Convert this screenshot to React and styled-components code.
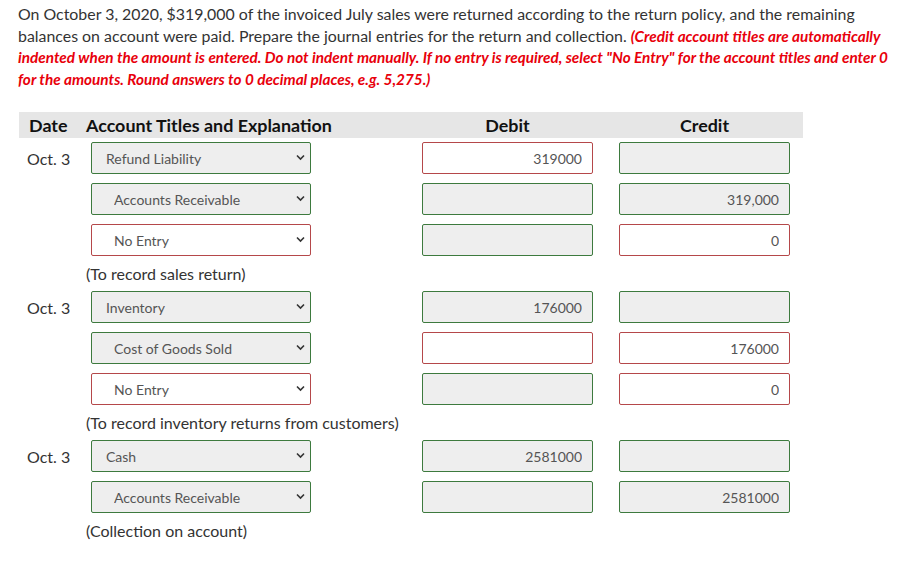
import * as React from 'react';
import styled, { createGlobalStyle } from 'styled-components';

const GlobalStyle = createGlobalStyle`
  body {
    margin: 0;
    background: #fff;
    font-family: Lato, "Open Sans", sans-serif;
    color: #333;
  }
`;

const Page = styled.div`
  padding: 3px 0 0 18px;
`;

const Prompt = styled.p`
  margin: 0;
  width: 884px;
  font-size: 15.9px;
  line-height: 21.5px;
  color: #333;
`;

const Hint = styled.span`
  color: #e8000b;
  font-weight: 700;
  font-style: italic;
  font-size: 15.3px;
  line-height: 1;
`;

const Journal = styled.div`
  margin: 23px 0 0 1px;
  width: 784px;
`;

const cols = '67px 336px 197px 184px';

const HeaderRow = styled.div`
  display: grid;
  grid-template-columns: ${cols};
  height: 26px;
  align-items: center;
  background: #e6e6e6;
  font-weight: 700;
  font-size: 17.9px;
  color: #111;
  margin-bottom: 4px;
`;

const HeadCell = styled.div`
  padding-left: ${p => (p.$pad ? '10px' : '0')};
  width: ${p => (p.$amount ? '171px' : 'auto')};
  text-align: ${p => (p.$amount ? 'center' : 'left')};
  white-space: nowrap;
`;

const Row = styled.div`
  display: grid;
  grid-template-columns: ${cols};
  height: 32px;
  align-items: center;
  margin-bottom: 9px;
`;

const DateCell = styled.div`
  padding-left: 8px;
  font-size: 16px;
  color: #333;
`;

const SelectWrap = styled.div`
  position: relative;
  margin-left: 5px;
  width: 220px;
  height: 32px;
`;

const Select = styled.select`
  appearance: none;
  width: 100%;
  height: 100%;
  box-sizing: border-box;
  border: 1px solid ${p => (p.$bad ? '#b5484a' : '#3d7a3e')};
  border-radius: 2px;
  background: ${p => (p.$bad ? '#fff' : '#eee')};
  padding: 0 0 0 ${p => (p.$indent ? '22px' : '14px')};
  font-family: Lato, "Open Sans", sans-serif;
  font-size: 14px;
  color: #555;
  outline: none;
`;

const Chevron = styled.svg`
  position: absolute;
  right: 6px;
  top: 12px;
  pointer-events: none;
`;

const Amount = styled.input`
  width: 171px;
  height: 32px;
  box-sizing: border-box;
  border: 1px solid ${p => (p.$bad ? '#b5484a' : '#3d7a3e')};
  border-radius: 2px;
  background: ${p => (p.$bad ? '#fff' : '#eee')};
  padding: 0 10px 0 8px;
  text-align: right;
  font-family: Lato, "Open Sans", sans-serif;
  font-size: 14px;
  color: #555;
  outline: none;
`;

const Note = styled.div`
  display: grid;
  grid-template-columns: ${cols};
  height: 26px;
  font-size: 16px;
  line-height: 17px;
  color: #333;
`;

const NoteText = styled.div`
  grid-column: 2 / 5;
`;

const groups = [
  {
    date: 'Oct. 3',
    note: '(To record sales return)',
    rows: [
      { account: 'Refund Liability', debit: ['319000', true], credit: ['', false] },
      { account: 'Accounts Receivable', indent: true, debit: ['', false], credit: ['319,000', false] },
      { account: 'No Entry', indent: true, bad: true, debit: ['', false], credit: ['0', true] }
    ]
  },
  {
    date: 'Oct. 3',
    note: '(To record inventory returns from customers)',
    rows: [
      { account: 'Inventory', debit: ['176000', false], credit: ['', false] },
      { account: 'Cost of Goods Sold', indent: true, debit: ['', true], credit: ['176000', true] },
      { account: 'No Entry', indent: true, bad: true, debit: ['', false], credit: ['0', true] }
    ]
  },
  {
    date: 'Oct. 3',
    note: '(Collection on account)',
    rows: [
      { account: 'Cash', debit: ['2581000', false], credit: ['', false] },
      { account: 'Accounts Receivable', indent: true, debit: ['', false], credit: ['2581000', false] }
    ]
  }
];

const AccountSelect = ({ account, indent, bad }) => (
  <SelectWrap>
    <Select defaultValue={account} $indent={indent} $bad={bad}>
      <option>{account}</option>
    </Select>
    <Chevron width="9" height="7" viewBox="0 0 9 7">
      <path d="M1 1.5 L4.5 5 L8 1.5" fill="none" stroke="#333" strokeWidth="1.6" />
    </Chevron>
  </SelectWrap>
);

export default function App() {
  return (
    <>
      <GlobalStyle />
      <Page>
        <Prompt>
          On October 3, 2020, $319,000 of the invoiced July sales were returned according to the return
          policy, and the remaining balances on account were paid. Prepare the journal entries for the
          return and collection.{' '}
          <Hint>
            (Credit account titles are automatically indented when the amount is entered. Do not indent
            manually. If no entry is required, select "No Entry" for the account titles and enter 0 for
            the amounts. Round answers to 0 decimal places, e.g. 5,275.)
          </Hint>
        </Prompt>
        <Journal>
          <HeaderRow>
            <HeadCell $pad>Date</HeadCell>
            <HeadCell>Account Titles and Explanation</HeadCell>
            <HeadCell $amount>Debit</HeadCell>
            <HeadCell $amount>Credit</HeadCell>
          </HeaderRow>
          {groups.map((g, gi) => (
            <React.Fragment key={gi}>
              {g.rows.map((r, ri) => (
                <Row key={ri}>
                  <DateCell>{ri === 0 ? g.date : ''}</DateCell>
                  <AccountSelect account={r.account} indent={r.indent} bad={r.bad} />
                  <Amount readOnly value={r.debit[0]} $bad={r.debit[1]} />
                  <Amount readOnly value={r.credit[0]} $bad={r.credit[1]} />
                </Row>
              ))}
              <Note>
                <NoteText>{g.note}</NoteText>
              </Note>
            </React.Fragment>
          ))}
        </Journal>
      </Page>
    </>
  );
}
